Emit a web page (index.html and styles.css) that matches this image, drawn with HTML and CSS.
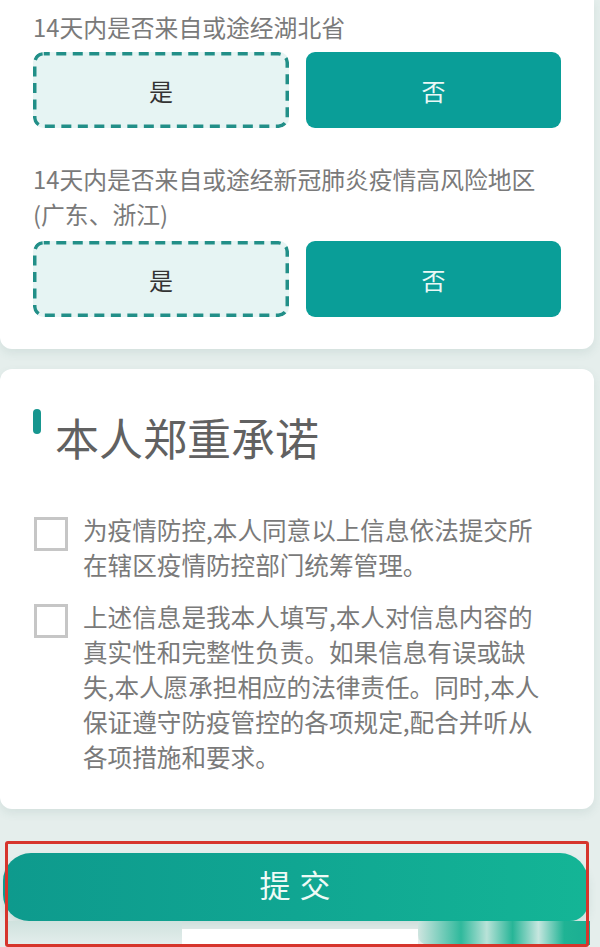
FILE: index.html
```html
<!DOCTYPE html>
<html lang="zh-CN">
<head>
<meta charset="utf-8">
<title>本人郑重承诺</title>
<link rel="stylesheet" href="styles.css">
</head>
<body>
<div class="page">
  <section class="card card-top">
    <div class="question">
      <div class="q-label">14天内是否来自或途经湖北省</div>
      <div class="choices">
        <div class="choice choice-yes">是</div>
        <div class="choice choice-no">否</div>
      </div>
    </div>
    <div class="question question-2">
      <div class="q-label">14天内是否来自或途经新冠肺炎疫情高风险地区<br>(广东、浙江)</div>
      <div class="choices">
        <div class="choice choice-yes">是</div>
        <div class="choice choice-no">否</div>
      </div>
    </div>
  </section>

  <section class="card card-pledge">
    <div class="pledge-title">
      <span class="title-bar"></span>
      <h2 class="title-text">本人郑重承诺</h2>
    </div>
    <div class="pledge-list">
      <div class="pledge-item">
        <span class="checkbox"></span>
        <p class="pledge-text">为疫情防控,本人同意以上信息依法提交所<br>在辖区疫情防控部门统筹管理。</p>
      </div>
      <div class="pledge-item">
        <span class="checkbox"></span>
        <p class="pledge-text">上述信息是我本人填写,本人对信息内容的<br>真实性和完整性负责。如果信息有误或缺<br>失,本人愿承担相应的法律责任。同时,本人<br>保证遵守防疫管控的各项规定,配合并听从<br>各项措施和要求。</p>
      </div>
    </div>
  </section>

  <div class="submit-zone">
    <div class="submit-btn">提 交</div>
    <div class="submit-base">
      <span class="base-shadow"></span>
      <span class="base-white"></span>
      <span class="base-green"></span>
    </div>
    <div class="highlight"></div>
  </div>
</div>
</body>
</html>
```

FILE: styles.css
```css
html, body {
  margin: 0;
  padding: 0;
}

body {
  background: #e5eeec;
  font-family: "Noto Sans CJK SC", "Noto Sans", sans-serif;
  width: 600px;
  height: 947px;
  overflow: hidden;
}

.page {
  display: flex;
  flex-direction: column;
}

.card {
  background: #ffffff;
  width: 594px;
  box-sizing: border-box;
  box-shadow: 0 4px 10px rgba(60, 110, 100, 0.10);
}

.card-top {
  border-radius: 0 0 12px 12px;
  padding: 9px 33px 32px 33px;
}

.question-2 {
  margin-top: 33px;
}

.q-label {
  font-size: 23.8px;
  line-height: 35px;
  color: #7a7a7a;
  margin-bottom: 8px;
  white-space: nowrap;
}

.question-2 .q-label {
  margin-bottom: 10px;
}

.choices {
  display: grid;
  grid-template-columns: 256px 255px;
  column-gap: 17px;
}

.choice {
  height: 76px;
  box-sizing: border-box;
  border-radius: 10px;
  display: flex;
  align-items: center;
  justify-content: center;
  font-size: 24px;
}

.choice-yes {
  background-color: #e6f4f3;
  background-image: url("data:image/svg+xml,%3Csvg xmlns='http://www.w3.org/2000/svg' width='256' height='76'%3E%3Crect x='1.75' y='1.75' width='252.5' height='72.5' rx='9' ry='9' fill='none' stroke='%23228f88' stroke-width='3.5' stroke-dasharray='10 6.5' stroke-dashoffset='4'/%3E%3C/svg%3E");
  background-repeat: no-repeat;
  background-size: 100% 100%;
  color: #333333;
}

.choice-no {
  background: #0a9e98;
  color: #eaf8f6;
  border-radius: 9px;
}

.card-pledge {
  margin-top: 20px;
  border-radius: 12px;
  padding: 38px 33px 35px 33px;
}

.pledge-title {
  display: flex;
  align-items: flex-start;
  gap: 14px;
}

.title-bar {
  width: 8px;
  height: 25px;
  margin-top: 2px;
  border-radius: 4px;
  background: #17968f;
  flex: none;
}

.title-text {
  margin: 0;
  font-size: 44px;
  line-height: 60px;
  font-weight: 400;
  color: #616161;
}

.pledge-list {
  margin-top: 45px;
  padding-left: 1px;
  display: flex;
  flex-direction: column;
  gap: 16.5px;
}

.pledge-item {
  display: flex;
  align-items: flex-start;
  gap: 15px;
}

.checkbox {
  flex: none;
  width: 34px;
  height: 34px;
  box-sizing: border-box;
  border: 3px solid #c6c6c6;
  margin-top: 5px;
}

.pledge-text {
  margin: 0;
  font-size: 24.6px;
  line-height: 35px;
  color: #7a7a7a;
  white-space: nowrap;
}

.submit-zone {
  position: relative;
  margin-top: 32px;
  height: 107px;
}

.submit-btn {
  margin: 12px 12px 0 3px;
  height: 68px;
  box-sizing: border-box;
  padding-bottom: 6px;
  border-radius: 28px 28px 18px 26px;
  background: linear-gradient(90deg, #0e9a8d 0%, #10a692 50%, #14b596 100%);
  color: #eefaf6;
  font-size: 31px;
  letter-spacing: 1px;
  display: flex;
  align-items: center;
  justify-content: center;
  box-shadow: 0 6px 10px rgba(40, 110, 100, 0.12);
}

.submit-base {
  display: flex;
  height: 24px;
  margin: 0 10px 0 6px;
}

.base-shadow {
  width: 176px;
  background: linear-gradient(180deg, #cfe2de 0%, #e4eeec 100%);
}

.base-white {
  width: 236px;
  margin-top: 8px;
  height: 15px;
  background: #ffffff;
}

.base-green {
  flex: 1;
  background: linear-gradient(90deg, #cfe5e0 0%, #2fb99c 25%, #b9e2d8 40%, #27b597 55%, #c6e6df 70%, #1fb394 85%, #1aae92 100%);
  border-radius: 0 0 0 10px;
}

.highlight {
  position: absolute;
  left: 5px;
  top: 0;
  width: 584px;
  height: 106px;
  box-sizing: border-box;
  border: 3px solid #d6352c;
  border-radius: 3px;
  pointer-events: none;
}
```
